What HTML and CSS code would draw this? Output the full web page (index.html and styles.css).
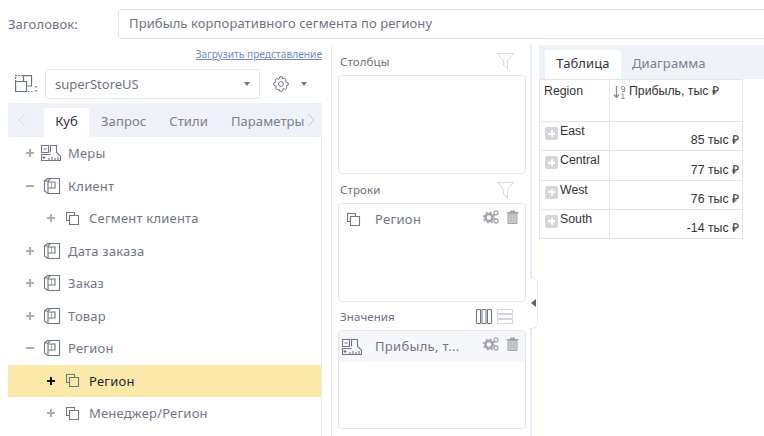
FILE: index.html
```html
<!DOCTYPE html>
<html lang="ru">
<head>
<meta charset="utf-8">
<title>Заголовок</title>
<link rel="stylesheet" href="styles.css">
</head>
<body>
<svg width="0" height="0" class="defs">
  <defs>
    <g id="cube" fill="none" stroke="currentColor" stroke-width="1.1">
      <path d="M.5 3L3.500 .5H15.500V15.500H4L.5 13Z"/>
      <path d="M.5 3H4V15.500M4 3L6.500 .5"/>
      <path d="M4 4H11V10H4"/>
      <path d="M7.500 4V10" opacity=".6"/>
    </g>
    <g id="hier" fill="none" stroke="currentColor" stroke-width="1.1">
      <path d="M.5 .5H8.500V3.500H3.500V8.500H.5Z"/>
      <path d="M3.500 3.500H12.500V12.500H3.500Z"/>
    </g>
    <g id="meas" fill="none" stroke="currentColor" stroke-width="1.1">
      <path d="M.5 .5H7.500V7.500H.5Z"/>
      <path d="M2.500 4H5.500"/>
      <path d="M9.500 7.500V.5H15.500V7.500L19.500 11V15.500H.5V9.500H9.500"/>
      <path d="M3 11V14M1.500 12.500H4.500M8 13V15M11 12V15M14 13V15M17 12V15"/>
    </g>
    <g id="gears" fill="none" stroke="currentColor">
      <circle cx="6" cy="7.500" r="3.500" stroke-width="2.600"/>
      <circle cx="6" cy="7.500" r="5.300" stroke-width="1.600" stroke-dasharray="2 2.160"/>
      <circle cx="13" cy="2.800" r="2" stroke-width="1.300"/>
      <circle cx="13" cy="11" r="2" stroke-width="1.300"/>
    </g>
    <g id="trash">
      <path fill="#c9cbd0" stroke="currentColor" d="M2 3.500H11V13.500H2Z"/>
      <path fill="currentColor" d="M4 .5H9V2H12.500V3.200H.5V2H4Z"/>
      <path stroke="currentColor" d="M5 5V12M8 5V12" opacity=".6"/>
    </g>
    <g id="funnel" fill="none" stroke="currentColor" stroke-width="1">
      <path d="M.5 .5H16.500L10.500 8V15.500L6.500 12V8Z"/>
    </g>
  </defs>
</svg>

<header class="title-row">
  <label class="title-label">Заголовок:</label>
  <div class="title-input">Прибыль корпоративного сегмента по региону</div>
</header>

<main class="columns">
  <section class="left">
    <a class="load-link">Загрузить представление</a>
    <div class="cube-row">
      <span class="cube-pick">
        <svg width="23" height="18" viewBox="0 0 23 18" fill="none" stroke="#6b7384" stroke-width="1.200"><path stroke-dasharray="2 1" d="M.6 7V.6H9"/><path d="M8.500 .6H16.500V11H12M8.500 .6V6"/><path d="M.6 6.500H11.500V16.500H.6Z"/><path stroke-dasharray="1.500 1.500" d="M13 16.500H18"/><path d="M21 11V12.500M21 15V16.500" stroke-width="1.500"/></svg>
      </span>
      <div class="select"><span>superStoreUS</span><i class="caret"></i></div>
      <svg class="gear" width="16" height="16" viewBox="0 0 16 16" fill="none" stroke="#6f7686"><circle cx="8" cy="8" r="2.400"/><path d="M6.800 .8H9.200L9.700 2.900L11.500 2L13.300 3.700L12.300 5.600L15.200 6.700V9.300L13.100 9.900L14 11.800L12.200 13.500L10.300 12.500L9.300 15.200H6.700L6.100 13.100L4.200 14L2.500 12.200L3.500 10.300L.8 9.300V6.700L2.900 6.100L2 4.200L3.800 2.500L5.700 3.500Z"/></svg>
      <i class="caret gear-caret"></i>
    </div>
    <nav class="tabs left-tabs">
      <svg class="chev" width="8" height="14" viewBox="0 0 8 14" fill="none" stroke="#d4d8e2"><path d="M7 1L1 7L7 13"/></svg>
      <span class="tab active">Куб</span>
      <span class="tab">Запрос</span>
      <span class="tab">Стили</span>
      <span class="tab">Параметры</span>
      <svg class="chev chev-right" width="8" height="14" viewBox="0 0 8 14" fill="none" stroke="#c4c8d2"><path d="M1 1L7 7L1 13"/></svg>
    </nav>
    <ul class="tree">
      <li class="node"><span class="pm plus"></span><svg class="nico meas" width="20" height="16" viewBox="0 0 20 16"><use href="#meas"/></svg><span>Меры</span></li>
      <li class="node"><span class="pm minus"></span><svg class="nico" width="20" height="16" viewBox="-3 0 20 16"><use href="#cube"/></svg><span>Клиент</span></li>
      <li class="node sub"><span class="pm plus"></span><svg class="nico" width="14" height="13" viewBox="0 0 14 13"><use href="#hier"/></svg><span>Сегмент клиента</span></li>
      <li class="node"><span class="pm plus"></span><svg class="nico" width="20" height="16" viewBox="-3 0 20 16"><use href="#cube"/></svg><span>Дата заказа</span></li>
      <li class="node"><span class="pm plus"></span><svg class="nico" width="20" height="16" viewBox="-3 0 20 16"><use href="#cube"/></svg><span>Заказ</span></li>
      <li class="node"><span class="pm plus"></span><svg class="nico" width="20" height="16" viewBox="-3 0 20 16"><use href="#cube"/></svg><span>Товар</span></li>
      <li class="node"><span class="pm minus"></span><svg class="nico" width="20" height="16" viewBox="-3 0 20 16"><use href="#cube"/></svg><span>Регион</span></li>
      <li class="node sub selected"><span class="pm plus"></span><svg class="nico" width="14" height="13" viewBox="0 0 14 13"><use href="#hier"/></svg><span>Регион</span></li>
      <li class="node sub"><span class="pm plus"></span><svg class="nico" width="14" height="13" viewBox="0 0 14 13"><use href="#hier"/></svg><span>Менеджер/Регион</span></li>
    </ul>
  </section>

  <section class="middle">
    <div class="well-head"><span>Столбцы</span><svg class="funnel" width="17" height="16" viewBox="0 0 17 16"><use href="#funnel"/></svg></div>
    <div class="well"></div>
    <div class="well-head"><span>Строки</span><svg class="funnel" width="17" height="16" viewBox="0 0 17 16"><use href="#funnel"/></svg></div>
    <div class="well">
      <div class="chip">
        <svg class="chip-ico" width="14" height="13" viewBox="0 0 14 13"><use href="#hier"/></svg>
        <span class="chip-name">Регион</span>
        <svg class="gears" width="16" height="14" viewBox="0 0 16 14"><use href="#gears"/></svg>
        <svg class="trash" width="13" height="14" viewBox="0 0 13 14"><use href="#trash"/></svg>
      </div>
    </div>
    <div class="well-head head-short"><span>Значения</span>
      <span class="layout-icons">
        <svg width="16" height="15" viewBox="0 0 16 15" fill="none" stroke="#6b7384"><path d="M.5 .5H4.500V14.500H.5ZM6 .5H10V14.500H6ZM11.500 .5H15.500V14.500H11.500Z"/></svg>
        <svg width="16" height="15" viewBox="0 0 16 15" fill="none" stroke="#d3d6dd"><path d="M.5 .5H15.500V4.500H.5ZM.5 5.500H15.500V9.500H.5ZM.5 10.500H15.500V14.500H.5Z"/></svg>
      </span>
    </div>
    <div class="well">
      <div class="chip chip-active">
        <svg class="chip-ico ico-wide" width="20" height="16" viewBox="0 0 20 16"><use href="#meas"/></svg>
        <span class="chip-name">Прибыль, т...</span>
        <svg class="gears" width="16" height="14" viewBox="0 0 16 14"><use href="#gears"/></svg>
        <svg class="trash" width="13" height="14" viewBox="0 0 13 14"><use href="#trash"/></svg>
      </div>
    </div>
    <div class="collapse"><i></i></div>
  </section>

  <section class="right">
    <nav class="tabs right-tabs">
      <span class="tab active">Таблица</span>
      <span class="tab">Диаграмма</span>
    </nav>
    <table class="grid">
      <thead>
        <tr><th class="c1">Region</th><th class="c2"><svg class="sort" width="13" height="14" viewBox="0 0 13 14" fill="none" stroke="#8a8f9a"><path d="M3.500 1V12M1 9.500L3.500 12.500L6 9.500" stroke-width="1.300"/><circle cx="10" cy="3" r="1.700" stroke-width=".9"/><path d="M11.700 3V6.500H9M10 8.500V13.500M8.500 13.500H11.700M8.800 9.500L10 8.500" stroke-width="1"/></svg>Прибыль, тыс ₽</th></tr>
      </thead>
      <tbody>
        <tr><td class="c1"><i class="exp"></i>East</td><td class="val">85 тыс ₽</td></tr>
        <tr><td class="c1"><i class="exp"></i>Central</td><td class="val">77 тыс ₽</td></tr>
        <tr><td class="c1"><i class="exp"></i>West</td><td class="val">76 тыс ₽</td></tr>
        <tr><td class="c1"><i class="exp"></i>South</td><td class="val">-14 тыс ₽</td></tr>
      </tbody>
    </table>
  </section>
</main>
</body>
</html>
```
FILE: styles.css
```css
* { box-sizing: border-box; }
html, body { margin: 0; height: 436px; overflow: hidden; background: #fff; }
body { font-family: "Noto Sans", "Open Sans", sans-serif; font-size: 13px; letter-spacing: .1px; color: #6f7686; }
.defs { position: absolute; }
ul { list-style: none; margin: 0; padding: 0; }
i { display: block; }

.title-row { display: flex; align-items: center; height: 30px; margin-top: 9px; padding-left: 8px; }
.title-label { width: 110px; color: #6e7480; font-size: 13px; }
.title-input { flex: 1; height: 30px; margin-right: -10px; border: 1px solid #e3e5ea; border-radius: 3px; padding-left: 10px; line-height: 27px; color: #6e7480; font-size: 13px; }

.columns { display: grid; grid-template-columns: 322px 209px 1fr; height: 397px; padding-left: 8px; margin-top: 6px; }
.left { width: 314px; min-width: 0; display: flex; flex-direction: column; }
.load-link { align-self: flex-end; margin-top: 2px; height: 14px; line-height: 14px; font-size: 10.200px; letter-spacing: 0; color: #6f8bc6; text-decoration: underline; }
.cube-row { display: flex; align-items: center; height: 30px; margin-top: 8px; }
.cube-pick { width: 37px; padding-left: 7px; display: flex; }
.select { width: 215px; height: 30px; display: flex; align-items: center; justify-content: space-between; border: 1px solid #e3e5ea; border-radius: 3px; padding: 0 9px 0 9px; color: #6e7480; letter-spacing: 0; }
.caret { width: 0; height: 0; border-left: 3.500px solid transparent; border-right: 3.500px solid transparent; border-top: 4px solid #6f7686; }
.gear { margin-left: 13px; }
.gear-caret { margin-left: 12px; }

.tabs { display: flex; align-items: flex-end; background: #eef1f8; height: 34px; }
.tab { display: block; height: 29px; line-height: 27px; color: #7a808e; white-space: nowrap; }
.tab.active { background: #fff; color: #2f3440; border-radius: 3px 3px 0 0; }
.left-tabs { position: relative; margin-top: 4px; font-size: 13px; }
.chev { align-self: center; margin: 0 0 0 10px; flex: none; }
.left-tabs .tab { margin-left: 23px; }
.left-tabs .tab.active { width: 45px; text-align: center; margin-left: 18px; }
.left-tabs .tab.active + .tab { margin-left: 12px; }
.chev-right { position: absolute; right: 7px; top: 10px; margin: 0; }

.tree { flex: 1; border-right: 1px solid #e6e9f6; }
.node { display: flex; align-items: center; height: 32.500px; padding-left: 18px; color: #6f7686; white-space: nowrap; letter-spacing: .2px; }
.node.sub { padding-left: 39px; }
.node.selected { background: #fce8a9; color: #22262e; }
.pm { position: relative; width: 8px; height: 8px; flex: none; color: #a8adb9; }
.pm::before { content: ""; position: absolute; left: 0; right: 0; top: 3px; height: 2px; background: currentColor; }
.pm.plus::after { content: ""; position: absolute; top: 0; bottom: 0; left: 3px; width: 2px; background: currentColor; }
.selected .pm { color: #111; }
.nico { flex: none; margin-left: 7px; margin-right: 7px; color: #6f7686; }
.sub .nico { margin-left: 11px; margin-right: 9px; }

.middle { position: relative; width: 201px; margin-left: 1px; padding: 0 4px 0 6px; border-left: 1px solid #e6e9f6; border-right: 2px solid #e6e9f6; }
.well-head { display: flex; align-items: center; justify-content: space-between; height: 29px; padding: 2px 12px 0 2px; font-size: 11.500px; color: #6b7280; }
.well-head:first-child { height: 30px; }
.head-short { height: 28px; padding-top: 1px; }
.funnel { color: #d5d8df; }
.layout-icons { display: flex; gap: 5px; margin-right: 1px; }
.well { height: 99px; border: 1px solid #e3e5ea; border-radius: 4px; overflow: hidden; }
.chip { display: flex; align-items: center; height: 31px; padding: 0 7px 0 8px; color: #6f7686; position: relative; }
.chip-active { background: #f5f7fb; }
.chip-ico { flex: none; color: #6f7686; }
.ico-wide { margin-left: -5px; }
.chip-name { position: absolute; left: 36px; top: 6px; letter-spacing: .3px; }
.gears { position: absolute; right: 26px; top: 6px; color: #a3a6ad; }
.trash { position: absolute; right: 6px; top: 6px; color: #a3a6ad; }
.collapse { position: absolute; right: -8px; top: 232px; width: 8px; height: 52px; background: #fff; border: 1px solid #e6e9f6; border-left: 0; border-radius: 0 6px 6px 0; display: flex; align-items: center; }
.collapse i { width: 0; height: 0; border-top: 4.500px solid transparent; border-bottom: 4.500px solid transparent; border-right: 5px solid #5b6270; margin-left: 1px; }

.right { min-width: 0; }
.right-tabs { margin-right: -4px; padding-left: 6px; }
.right-tabs .tab.active { width: 76px; text-align: center; }
.right-tabs .tab:not(.active) { margin-left: 11px; }
.grid { border-collapse: collapse; table-layout: fixed; width: 204px; font-family: "Liberation Sans", Arial, sans-serif; font-size: 12.300px; letter-spacing: 0; color: #333; }
.grid th, .grid td { border: 1px solid #e4e5e8; padding: 0; font-weight: 400; vertical-align: top; text-align: left; }
.grid thead tr { height: 42px; }
.grid tbody tr { height: 29.330px; }
.c1 { width: 70px; padding-left: 4px !important; }
.grid th { padding-top: 4px !important; line-height: 14px; }
.grid td.c1 { padding-top: 2px !important; line-height: 14px; }
.c2 { line-height: 14px; }
.sort { vertical-align: top; margin: 1px 3px 0 3px; }
.exp { display: inline-block; position: relative; width: 13px; height: 13px; background: #d5d6d9; border-radius: 2px; vertical-align: top; margin: 3px 2px 0 1px; }
.exp::before { content: ""; position: absolute; left: 3px; right: 3px; top: 5.500px; height: 2px; background: #fff; }
.exp::after { content: ""; position: absolute; top: 3px; bottom: 3px; left: 5.500px; width: 2px; background: #fff; }
.grid td.val { text-align: right; vertical-align: bottom; padding: 0 3px 3px 0; line-height: 14px; }
```
